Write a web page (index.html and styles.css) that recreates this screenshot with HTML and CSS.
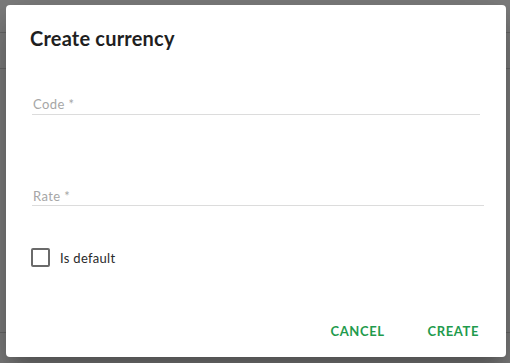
FILE: index.html
```html
<!DOCTYPE html>
<html lang="en">
<head>
<meta charset="utf-8">
<title>Create currency</title>
<link rel="stylesheet" href="styles.css">
</head>
<body>
<div class="page">
  <div class="page-line line-a"></div>
  <div class="page-line line-b"></div>
  <div class="page-line line-c"></div>
</div>
<div class="backdrop">
  <div class="dialog">
    <h2 class="dialog-title">Create currency</h2>
    <div class="dialog-content">
      <div class="field field-code">
        <label class="field-label">Code *</label>
        <div class="field-line"></div>
      </div>
      <div class="field field-rate">
        <label class="field-label">Rate *</label>
        <div class="field-line"></div>
      </div>
      <label class="check">
        <span class="check-box"></span>
        <span class="check-text">Is default</span>
      </label>
    </div>
    <div class="dialog-actions">
      <button class="btn">CANCEL</button>
      <button class="btn">CREATE</button>
    </div>
  </div>
</div>
</body>
</html>
```
FILE: styles.css
```css
html, body {
  margin: 0;
  padding: 0;
  width: 510px;
  height: 363px;
  overflow: hidden;
}
body {
  background: #fafafa;
  font-family: "Lato", "Liberation Sans", sans-serif;
  position: relative;
}
.page {
  position: absolute;
  inset: 0;
}
.page-line {
  position: absolute;
  left: 0;
  right: 0;
  height: 1px;
  background: #d0d0d0;
}
.line-a { top: 32px; }
.line-b { top: 68px; }
.line-c { top: 332px; }
.backdrop {
  position: absolute;
  inset: 0;
  background: rgba(0, 0, 0, 0.5);
  display: flex;
  padding: 5px 0 0 6px;
  box-sizing: border-box;
}
.dialog {
  width: 500px;
  height: 352px;
  background: #fff;
  border-radius: 4px;
  box-shadow: 0 11px 15px -7px rgba(0,0,0,0.2), 0 24px 38px 3px rgba(0,0,0,0.14), 0 9px 46px 8px rgba(0,0,0,0.12);
  display: flex;
  flex-direction: column;
  box-sizing: border-box;
}
.dialog-title {
  margin: 0;
  padding: 21px 24px 0 24px;
  font-size: 20px;
  line-height: 24px;
  font-weight: 700;
  color: #1f1f1f;
  letter-spacing: 0.2px;
}
.dialog-content {
  flex: 1;
  padding: 0 20px 0 26px;
  display: flex;
  flex-direction: column;
}
.field {
  display: flex;
  flex-direction: column;
}
.field-code {
  margin-top: 46px;
  width: 448px;
}
.field-rate {
  margin-top: 73px;
  width: 452px;
}
.field-label {
  font-size: 13px;
  line-height: 16px;
  color: #a6a6a6;
  padding-left: 1px;
  letter-spacing: 0.4px;
}
.field-code .field-label { padding-bottom: 2px; }
.field-rate .field-label { padding-bottom: 1px; }
.field-line {
  height: 1px;
  background: #dcdcdc;
}
.check {
  margin-top: 42px;
  margin-left: -1px;
  display: flex;
  align-items: center;
  gap: 10px;
}
.check-box {
  width: 15px;
  height: 15px;
  border: 2px solid #6a6a6a;
  border-radius: 2px;
}
.check-text {
  font-size: 13px;
  color: #2a2a2a;
  letter-spacing: 0.3px;
}
.dialog-actions {
  display: flex;
  justify-content: flex-end;
  gap: 19px;
  padding: 0 15px 12px 0;
}
.btn {
  background: none;
  border: none;
  padding: 6px 12px;
  font-family: inherit;
  font-size: 13px;
  font-weight: 700;
  color: #1f9b4d;
  letter-spacing: 0.6px;
  line-height: 16px;
}
```
